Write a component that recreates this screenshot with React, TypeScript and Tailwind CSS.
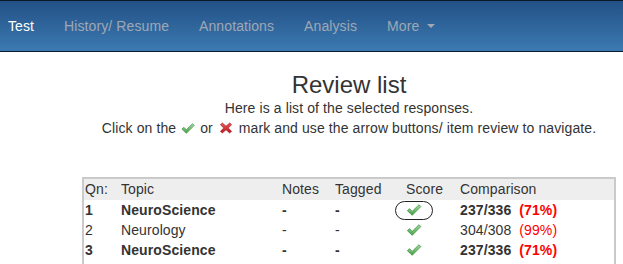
import React from 'react';

const CheckIcon: React.FC<{ className?: string }> = ({ className }) => (
  <svg viewBox="0 0 16 13" className={className}>
    <defs>
      <linearGradient id="chk" x1="0" y1="0" x2="0" y2="1">
        <stop offset="0" stopColor="#a3dca3" />
        <stop offset="1" stopColor="#45a345" />
      </linearGradient>
    </defs>
    <path
      d="M0.8 7.2 L3.2 5.1 L6 8 L13.4 0.8 L15.4 2.8 L6.1 12.2 Z"
      fill="url(#chk)"
      stroke="#3b8a3b"
      strokeWidth="0.8"
      strokeLinejoin="round"
    />
  </svg>
);

const CrossIcon: React.FC<{ className?: string }> = ({ className }) => (
  <svg viewBox="0 0 14 13" className={className}>
    <defs>
      <linearGradient id="crs" x1="0" y1="0" x2="0" y2="1">
        <stop offset="0" stopColor="#f0585c" />
        <stop offset="1" stopColor="#b8161b" />
      </linearGradient>
    </defs>
    <path
      d="M1 3 L3 1 L7 4.6 L11 1 L13 3 L9.4 6.5 L13 10 L11 12 L7 8.4 L3 12 L1 10 L4.6 6.5 Z"
      fill="url(#crs)"
      stroke="#9c1115"
      strokeWidth="0.7"
      strokeLinejoin="round"
    />
  </svg>
);

interface Row {
  qn: number;
  topic: string;
  notes: string;
  tagged: string;
  score: string;
  pct: string;
  bold: boolean;
  focused?: boolean;
}

const rows: Row[] = [
  { qn: 1, topic: 'NeuroScience', notes: '-', tagged: '-', score: '237/336', pct: '(71%)', bold: true, focused: true },
  { qn: 2, topic: 'Neurology', notes: '-', tagged: '-', score: '304/308', pct: '(99%)', bold: false },
  { qn: 3, topic: 'NeuroScience', notes: '-', tagged: '-', score: '237/336', pct: '(71%)', bold: true },
];

const cols = 'grid grid-cols-[36px_161px_53px_71px_54px_1fr]';

export default function App() {
  const navItems = ['History/ Resume', 'Annotations', 'Analysis'];

  return (
    <div className="h-[264px] overflow-hidden bg-white text-[14px] tracking-[0.1px] text-[#333] font-['Liberation_Sans',Arial,sans-serif]">
      <nav className="flex h-[52px] items-center gap-[30px] border-y border-[#0b1a2a] bg-gradient-to-b from-[#235186] to-[#3b7ab1] pl-[8px] leading-5">
        <a className="text-white">Test</a>
        {navItems.map((item) => (
          <a key={item} className="text-[#9fa8b4]">
            {item}
          </a>
        ))}
        <a className="flex items-center text-[#9fa8b4]">
          More
          <span className="ml-[8px] h-0 w-0 border-x-[4px] border-t-[4px] border-x-transparent border-t-[#9fa8b4]" />
        </a>
      </nav>

      <div className="ml-[82px] w-[534px]">
        <div className="text-center">
          <h3 className="mt-5 text-[24px] leading-[1.1] tracking-normal">Review list</h3>
          <p className="leading-5">Here is a list of the selected responses.</p>
          <p className="flex items-center justify-center leading-5">
            Click on the&nbsp;
            <CheckIcon className="mx-px h-[11px] w-[14px]" />
            &nbsp;or&nbsp;
            <CrossIcon className="mx-[2px] h-[12px] w-[14px]" />
            &nbsp;mark and use the arrow buttons/ item review to navigate.
          </p>
        </div>

        <div className="mt-[39px] h-[120px] border-x-[2px] border-t-[2px] border-[#cacaca]">
          <div className={`${cols} h-[21px] bg-[#eeeeee] pl-px leading-5`}>
            <span>Qn:</span>
            <span>Topic</span>
            <span>Notes</span>
            <span>Tagged</span>
            <span>Score</span>
            <span>Comparison</span>
          </div>
          {rows.map((r) => (
            <div key={r.qn} className={`${cols} h-5 items-center pl-px leading-5 ${r.bold ? 'font-bold' : ''}`}>
              <span>{r.qn}</span>
              <span>{r.topic}</span>
              <span>{r.notes}</span>
              <span>{r.tagged}</span>
              <span className="flex">
                <span
                  className={`-ml-[11px] inline-flex h-[19px] items-center rounded-full border px-[10px] ${
                    r.focused ? 'border-[#222]' : 'border-transparent'
                  }`}
                >
                  <CheckIcon className="h-[12px] w-[16px]" />
                </span>
              </span>
              <span>
                {r.score}
                <span className="ml-[8px] text-[#ff0000]">{r.pct}</span>
              </span>
            </div>
          ))}
        </div>
      </div>
    </div>
  );
}
